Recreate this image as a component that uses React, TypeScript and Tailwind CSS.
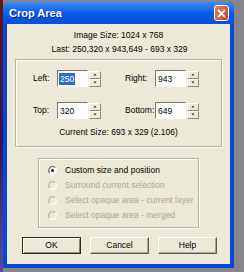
import React from "react";

const font = { fontFamily: '"Liberation Sans", Arial, sans-serif' };

function Spinner() {
  const half = (up: boolean) => (
    <div className="flex h-[8px] w-[12px] items-center justify-center border-t border-l border-t-white border-l-white border-b border-r border-b-[#8a887c] border-r-[#8a887c] bg-[#ece9d8]">
      <svg width="4" height="3" viewBox="0 0 4 3">
        {up ? <path d="M2 0.5 L3.5 2.5 L0.5 2.5 Z" fill="#333" /> : <path d="M0.5 0.5 L3.5 0.5 L2 2.5 Z" fill="#333" />}
      </svg>
    </div>
  );
  return (
    <div className="flex flex-col ml-[1px]">
      {half(true)}
      {half(false)}
    </div>
  );
}

function Field({ value, selected }: { value: string; selected?: boolean }) {
  return (
    <div className="flex h-[17px] items-center">
      <div className="flex h-[17px] w-[31px] items-center border-t border-l border-t-[#7a7868] border-l-[#7a7868] border-b border-r border-b-white border-r-white bg-white pl-[1px]">
        <span className={selected ? "bg-[#316ac5] text-white px-[1px] leading-[12px]" : "px-[1px] leading-[12px]"}>{value}</span>
      </div>
      <Spinner />
    </div>
  );
}

function Radio({ checked, disabled, label }: { checked?: boolean; disabled?: boolean; label: string }) {
  return (
    <div className="flex h-[15px] items-center">
      <svg width="9" height="9" viewBox="0 0 9 9" className="ml-[9px] mr-[8px]">
        <circle cx="4.5" cy="4.5" r="3.8" fill={disabled ? "#ece9d8" : "#fff"} />
        <path d="M7.2 1.8 A3.8 3.8 0 0 0 1.8 7.2" stroke={disabled ? "#b8b5a6" : "#6a6858"} strokeWidth="1.2" fill="none" />
        <path d="M7.2 1.8 A3.8 3.8 0 0 1 1.8 7.2" stroke="#fff" strokeWidth="1.2" fill="none" />
        {checked && <circle cx="4.5" cy="4.5" r="1.5" fill="#111" />}
      </svg>
      <span className={disabled ? "text-[#aca899]" : "text-black"}>{label}</span>
    </div>
  );
}

function Btn({ label, def }: { label: string; def?: boolean }) {
  return (
    <div
      className={
        def
          ? "flex h-[17px] w-[59px] items-center justify-center border border-[#2a2a22] bg-[#ece9d8] shadow-[inset_1px_1px_0_#fff,inset_-1px_-1px_0_#8a887c]"
          : "flex h-[17px] w-[59px] items-center justify-center border-t border-l border-t-white border-l-white border-b border-r border-b-[#5e5c50] border-r-[#5e5c50] bg-[#ece9d8] shadow-[inset_-1px_-1px_0_#aca899]"
      }
    >
      {label}
    </div>
  );
}

export default function App() {
  return (
    <div className="relative flex h-[272px] w-[244px] overflow-hidden bg-[#85858c]" style={font}>
      <div className="h-full w-[3px] bg-gradient-to-b from-[#6a1010] via-[#3a1050] to-[#5a4a9a]" />
      <div className="mt-[2px] flex h-[266px] w-[231px] flex-col rounded-t-[6px] bg-[#0a46d8]">
        <div className="flex h-[22px] items-center justify-between rounded-t-[6px] bg-gradient-to-b from-[#3d8df5] via-[#0a5ae8] to-[#0650dc] pl-[6px] pr-[5px]">
          <span className="text-[11px] font-bold text-white [text-shadow:1px_1px_0_#0a2a8a]">Crop Area</span>
          <div className="flex h-[16px] w-[15px] items-center justify-center rounded-[3px] border border-white bg-gradient-to-br from-[#e8805c] to-[#c8401c]">
            <svg width="9" height="9" viewBox="0 0 9 9">
              <path d="M1.5 1.5 L7.5 7.5 M7.5 1.5 L1.5 7.5" stroke="#fff" strokeWidth="1.8" strokeLinecap="round" />
            </svg>
          </div>
        </div>
        <div className="mx-[4px] mb-[4px] flex flex-1 flex-col bg-[#ece9d8] text-[8.5px] text-black">
          <div className="mt-[6px] flex h-[10px] items-center justify-center">Image Size: 1024 x 768</div>
          <div className="mt-[4px] flex h-[10px] items-center justify-center pl-[2px]">Last: 250,320 x 943,649 - 693 x 329</div>
          <div className="ml-[8px] mt-[5px] flex h-[88px] w-[207px] flex-col border border-[#b8b5a6] shadow-[inset_1px_1px_0_#fff,1px_1px_0_#fff]">
            <div className="mt-[10px] flex h-[17px] items-center">
              <span className="ml-[17px] w-[24px]">Left:</span>
              <Field value="250" selected />
              <span className="ml-[24px] w-[30px]">Right:</span>
              <Field value="943" />
            </div>
            <div className="mt-[15px] flex h-[17px] items-center">
              <span className="ml-[17px] w-[24px]">Top:</span>
              <Field value="320" />
              <span className="ml-[24px] w-[30px]">Bottom:</span>
              <Field value="649" />
            </div>
            <div className="mt-[8px] flex h-[10px] items-center justify-center">Current Size: 693 x 329 (2.106)</div>
          </div>
          <div className="ml-[31px] mt-[11px] flex h-[70px] w-[161px] flex-col border border-[#b8b5a6] pt-[4px] shadow-[inset_1px_1px_0_#fff,1px_1px_0_#fff]">
            <Radio checked label="Custom size and position" />
            <Radio disabled label="Surround current selection" />
            <Radio disabled label="Select opaque area - current layer" />
            <Radio disabled label="Select opaque area - merged" />
          </div>
          <div className="ml-[15px] mt-[9px] flex gap-[9px]">
            <Btn label="OK" def />
            <Btn label="Cancel" />
            <Btn label="Help" />
          </div>
        </div>
      </div>
    </div>
  );
}
